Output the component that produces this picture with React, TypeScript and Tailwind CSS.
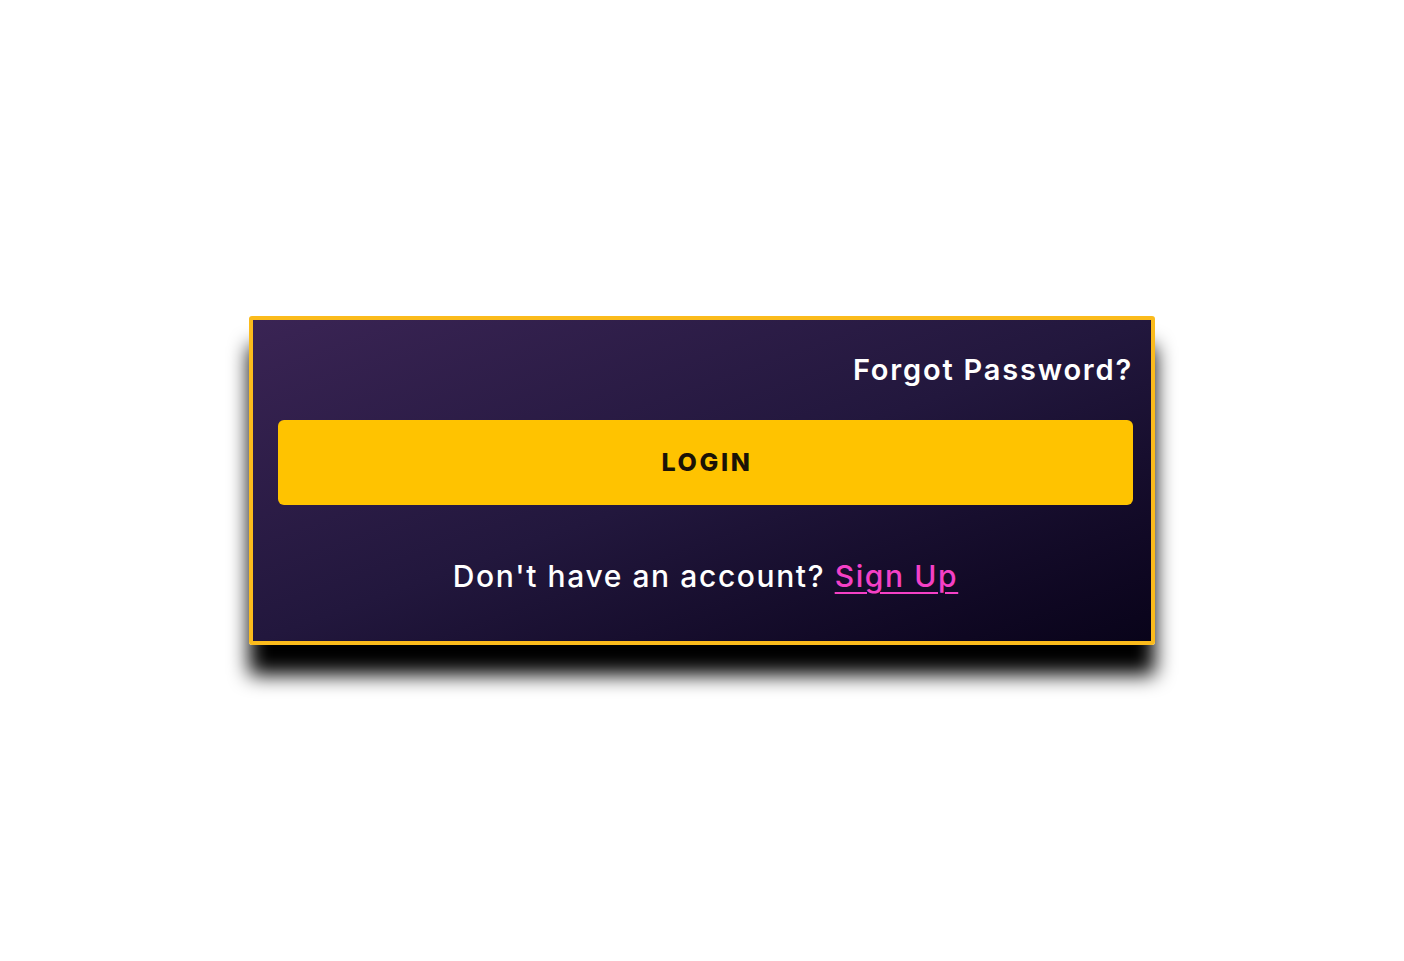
export default function App() {
  return (
    <div className="min-h-screen bg-white flex items-center justify-center font-['Inter',sans-serif]">
      <div className="w-[906px] h-[329px] rounded-[3px] border-4 border-[#fbbb1c] bg-gradient-to-br from-[#3a2454] via-[#22173d] to-[#09041a] shadow-[0_30px_20px_rgba(0,0,0,1)] pl-[25px] pr-[18px] pt-[32px] flex flex-col">
        <div className="flex justify-end">
          <a href="#" className="text-[29px] leading-[36px] font-semibold text-white tracking-[1.8px]">
            Forgot Password?
          </a>
        </div>
        <button
          type="button"
          className="mt-[32px] h-[85px] w-full rounded-[6px] bg-[#ffc300] text-[#1b1306] text-[25px] font-extrabold tracking-[2.6px] pl-[3px]"
        >
          LOGIN
        </button>
        <p className="mt-[53px] text-center text-[30px] leading-[36px] font-medium text-white tracking-[1.6px]">
          Don't have an account?{' '}
          <a href="#" className="text-[#f440c6] underline underline-offset-[5px] decoration-2">
            Sign Up
          </a>
        </p>
      </div>
    </div>
  );
}
